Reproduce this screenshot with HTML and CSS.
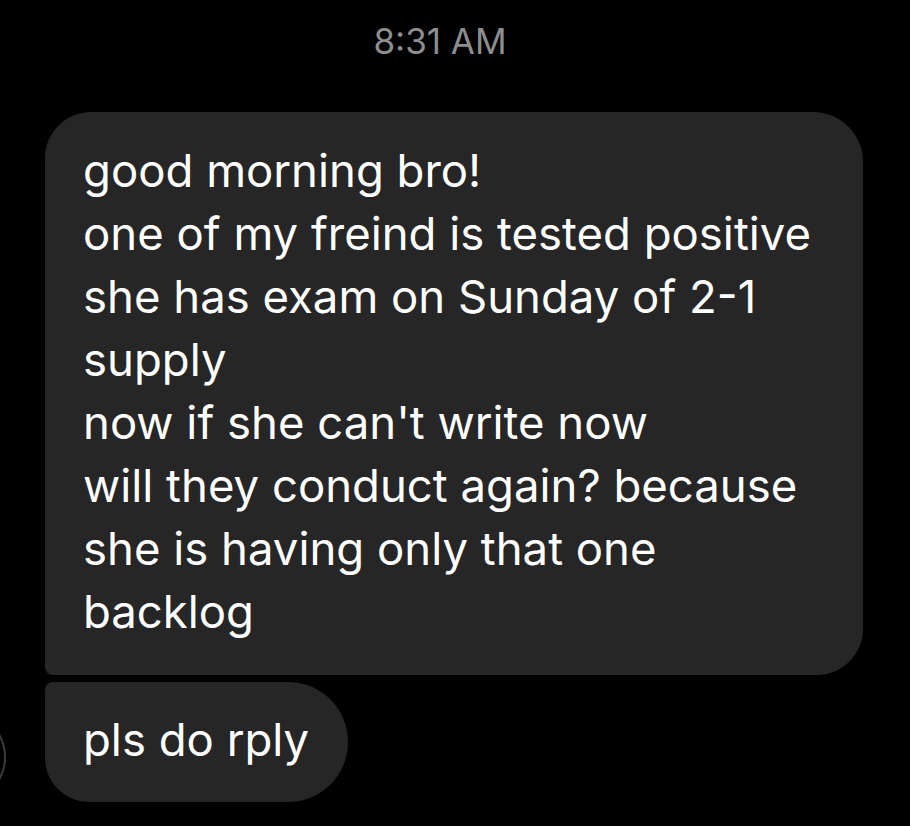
FILE: index.html
```html
<!DOCTYPE html>
<html>
<head>
<meta charset="utf-8">
<link rel="stylesheet" href="styles.css">
</head>
<body>
<div class="thread">
  <div class="timestamp">8:31 AM</div>
  <div class="group">
    <div class="avatar"></div>
    <div class="bubble bubble-first">good morning bro!<br>one of my freind is tested positive<br>she has exam on Sunday of 2-1<br>supply<br>now if she can't write now<br>will they conduct again? because<br>she is having only that one<br>backlog</div>
    <div class="bubble bubble-last">pls do rply</div>
  </div>
</div>
</body>
</html>
```
FILE: styles.css
```css
html, body {
  margin: 0;
  padding: 0;
  background: #000;
}
body {
  width: 910px;
  height: 826px;
  overflow: hidden;
  font-family: Inter, "Liberation Sans", sans-serif;
  -webkit-font-smoothing: antialiased;
}
.thread {
  display: flex;
  flex-direction: column;
}
.timestamp {
  margin-top: 20px;
  padding-right: 30px;
  height: 42px;
  line-height: 42px;
  font-size: 35px;
  color: #8e8e8e;
  text-align: center;
}
.group {
  position: relative;
  display: flex;
  flex-direction: column;
  align-items: flex-start;
  gap: 7px;
  margin-top: 50px;
  padding-left: 45px;
}
.bubble {
  background: #262626;
  color: #fff;
  font-size: 45.5px;
  letter-spacing: 0;
  line-height: 63px;
  white-space: nowrap;
  box-sizing: border-box;
}
.bubble-first {
  width: 818px;
  padding: 27px 40px 32px 38px;
  border-radius: 46px 50px 46px 8px;
}
.bubble-last {
  padding: 26px 39px 31px 38px;
  border-radius: 8px 60px 60px 44px;
}
.avatar {
  position: absolute;
  left: -84px;
  bottom: 0;
  width: 86px;
  height: 86px;
  border: 2px solid #3a3a3a;
  border-radius: 50%;
}
```
